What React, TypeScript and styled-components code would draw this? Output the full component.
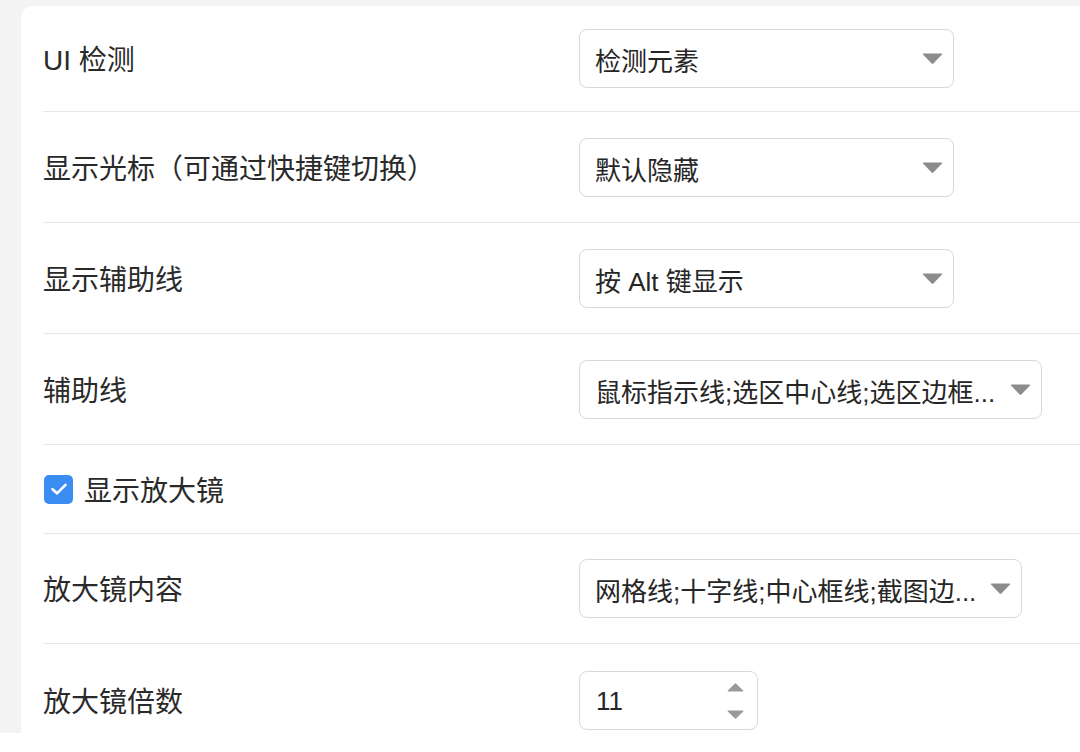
import React from "react";
import styled, { createGlobalStyle } from "styled-components";

const Global = createGlobalStyle`
  html, body { margin: 0; padding: 0; background: #ffffff; }
  body { font-family: "Liberation Sans", "Noto Sans CJK SC", sans-serif; color: #262626; }
  * { box-sizing: border-box; }
`;

const Page = styled.div`
  width: 1080px;
  height: 733px;
  background: #f3f3f3;
  padding: 6px 0 0 21px;
  overflow: hidden;
`;

const Card = styled.div`
  background: #ffffff;
  height: 100%;
  border-top-left-radius: 12px;
  padding-left: 22px;
`;

const Row = styled.div<{ $h: number; $last?: boolean }>`
  display: grid;
  grid-template-columns: 536px auto;
  align-items: center;
  height: ${(p) => p.$h}px;
  border-bottom: ${(p) => (p.$last ? "none" : "1px solid #e8e8e8")};
`;

const Label = styled.div`
  font-size: 28px;
  line-height: 1;
  color: #2a2a2a;
  padding-top: 5px;
  white-space: nowrap;
`;

const SelectBox = styled.div<{ $w: number }>`
  width: ${(p) => p.$w}px;
  height: 59px;
  border: 1px solid #d9d9d9;
  border-radius: 8px;
  background: #fff;
  display: flex;
  align-items: center;
  padding: 0 10px 0 15px;
  gap: 12px;
`;

const SelectText = styled.span`
  flex: 1;
  font-size: 26px;
  padding-top: 2px;
  color: #262626;
  white-space: nowrap;
  overflow: hidden;
`;

const CheckRow = styled.label`
  display: flex;
  align-items: center;
  gap: 11px;
`;

const CheckBox = styled.span`
  width: 29px;
  height: 29px;
  border-radius: 5px;
  background: #3b8df3;
  display: flex;
  align-items: center;
  justify-content: center;
  margin-left: 1px;
`;

const NumberBox = styled.div`
  width: 179px;
  height: 59px;
  border: 1px solid #d9d9d9;
  border-radius: 8px;
  display: flex;
  align-items: center;
  padding: 0 13px 0 16px;
`;

const NumberText = styled.span`
  flex: 1;
  font-size: 26px;
  padding-top: 2px;
  color: #262626;
`;

const Spinner = styled.div`
  display: flex;
  flex-direction: column;
  gap: 18px;
`;

const Caret = () => (
  <svg width="21" height="11" viewBox="0 0 21 11">
    <path d="M1.5 0.5 H19.5 Q20.8 0.5 20 1.6 L11.6 10.2 Q10.5 11.2 9.4 10.2 L1 1.6 Q0.2 0.5 1.5 0.5 Z" fill="#8c8c8c" />
  </svg>
);

const SmallCaret = ({ up }: { up?: boolean }) => (
  <svg width="17" height="9" viewBox="0 0 17 9" style={up ? { transform: "rotate(180deg)" } : undefined}>
    <path d="M1.2 0.5 H15.8 Q16.9 0.5 16.2 1.4 L9.3 8.3 Q8.5 9 7.7 8.3 L0.8 1.4 Q0.1 0.5 1.2 0.5 Z" fill="#9a9a9a" />
  </svg>
);

const Select = ({ w, text }: { w: number; text: string }) => (
  <SelectBox $w={w}>
    <SelectText>{text}</SelectText>
    <Caret />
  </SelectBox>
);

export default function App() {
  return (
    <>
      <Global />
      <Page>
        <Card>
          <Row $h={106}>
            <Label>UI 检测</Label>
            <Select w={375} text="检测元素" />
          </Row>
          <Row $h={111}>
            <Label>显示光标（可通过快捷键切换）</Label>
            <Select w={375} text="默认隐藏" />
          </Row>
          <Row $h={111}>
            <Label>显示辅助线</Label>
            <Select w={375} text="按 Alt 键显示" />
          </Row>
          <Row $h={111}>
            <Label>辅助线</Label>
            <Select w={463} text="鼠标指示线;选区中心线;选区边框..." />
          </Row>
          <Row $h={89}>
            <CheckRow>
              <CheckBox>
                <svg width="18" height="14" viewBox="0 0 18 14">
                  <path d="M2.5 7.2 L7 11.3 L15.5 2.8" fill="none" stroke="#fff" strokeWidth="2.6" strokeLinecap="round" strokeLinejoin="round" />
                </svg>
              </CheckBox>
              <Label>显示放大镜</Label>
            </CheckRow>
          </Row>
          <Row $h={110}>
            <Label>放大镜内容</Label>
            <Select w={443} text="网格线;十字线;中心框线;截图边..." />
          </Row>
          <Row $h={113} $last>
            <Label>放大镜倍数</Label>
            <NumberBox>
              <NumberText>11</NumberText>
              <Spinner>
                <SmallCaret up />
                <SmallCaret />
              </Spinner>
            </NumberBox>
          </Row>
        </Card>
      </Page>
    </>
  );
}
